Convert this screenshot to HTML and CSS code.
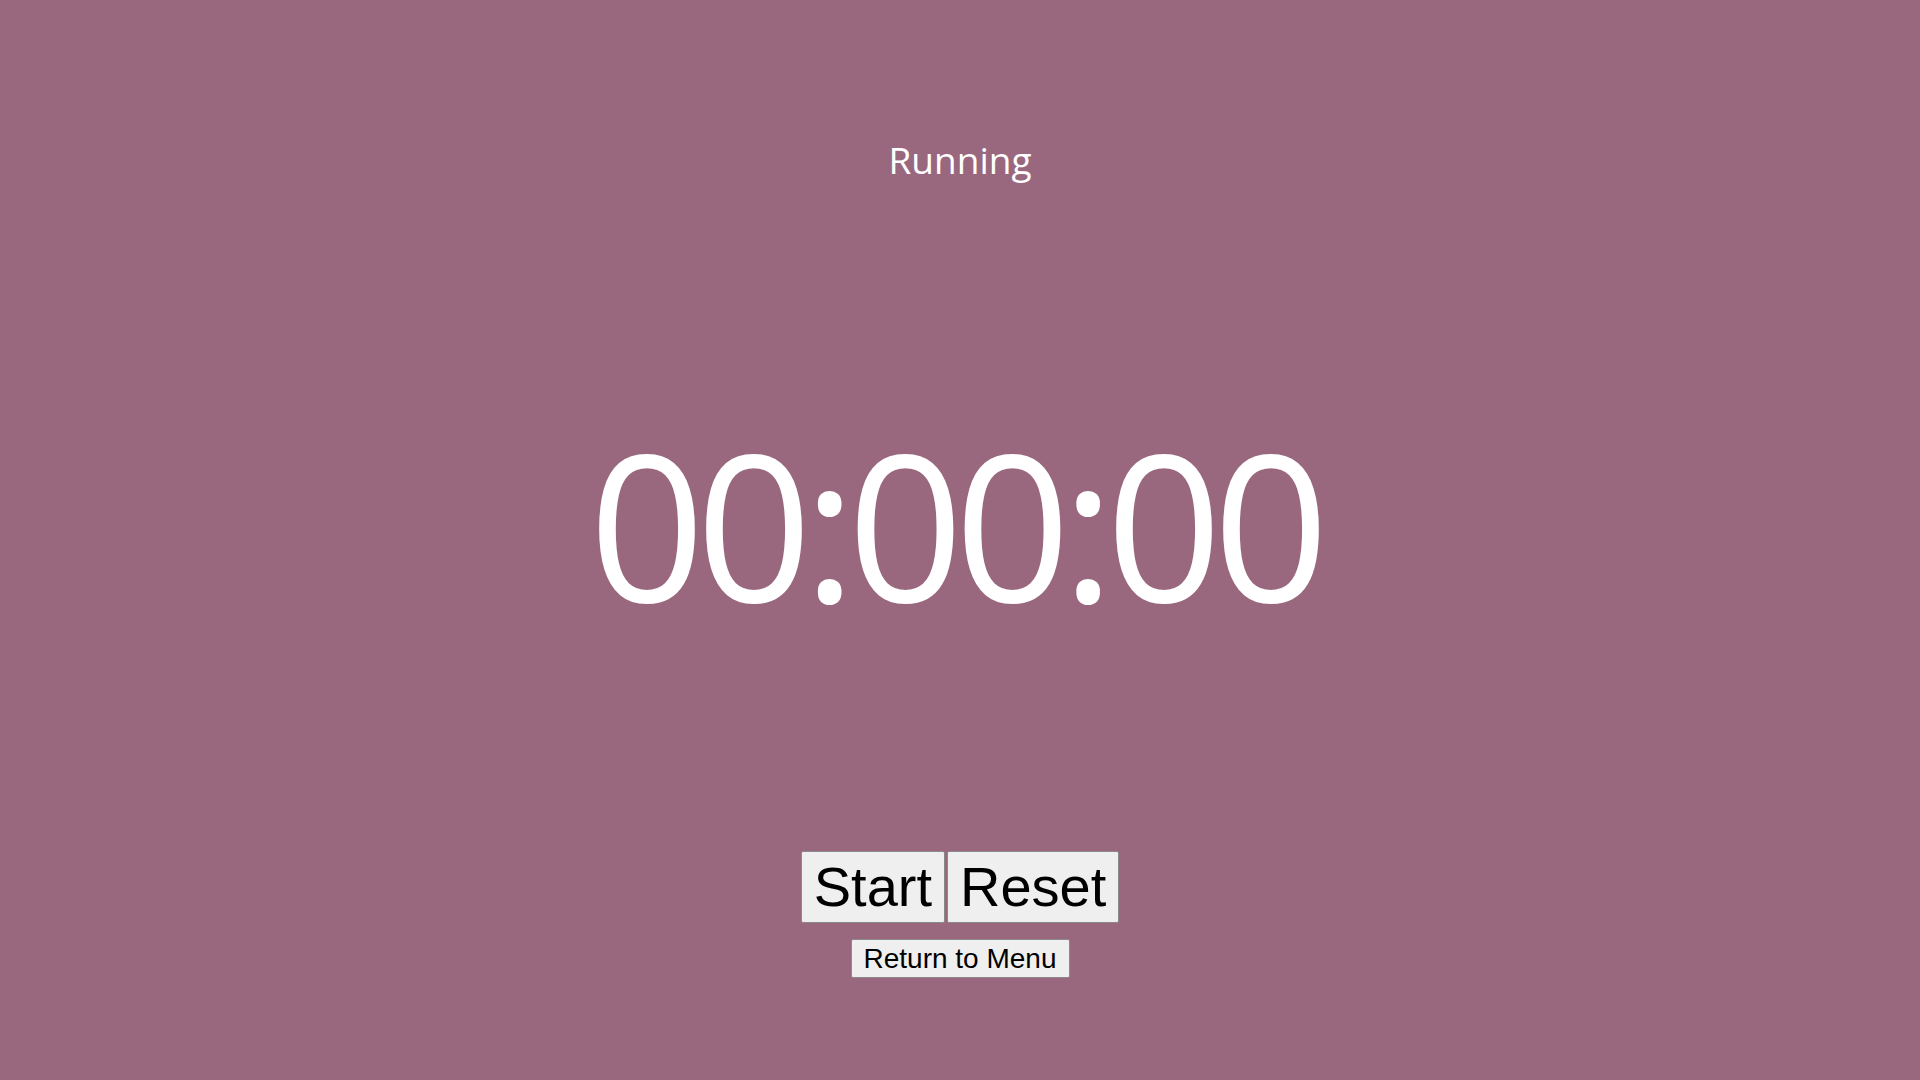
FILE: index.html
```html
<!DOCTYPE html>
<html lang="en">
<head>
<meta charset="utf-8">
<title>Stopwatch</title>
<link rel="stylesheet" href="styles.css">
</head>
<body>
<main class="page">
  <div class="status">Running</div>
  <div class="timer"><span class="timer-text">00:00:00</span></div>
  <div class="controls">
    <button class="btn btn-big">Start</button>
    <button class="btn btn-big">Reset</button>
  </div>
  <button class="btn btn-small">Return to Menu</button>
</main>
</body>
</html>
```
FILE: styles.css
```css
html, body {
  margin: 0;
  padding: 0;
  height: 100%;
}
body {
  background: #99677e;
  overflow: hidden;
}
.page {
  display: flex;
  flex-direction: column;
  align-items: center;
  padding-top: 135px;
}
.status {
  font-family: "Open Sans", "Noto Sans", sans-serif;
  font-size: 37px;
  line-height: 49px;
  color: #ffffff;
}
.timer {
  margin-top: 237px;
  height: 204px;
  font-family: "Open Sans", "Noto Sans", sans-serif;
  font-size: 203px;
  line-height: 204px;
  color: #ffffff;
  display: flex;
  justify-content: center;
}
.timer-text {
  display: inline-block;
  letter-spacing: -9px;
  margin-right: 11px;
  white-space: nowrap;
}
.controls {
  margin-top: 226px;
  display: flex;
  gap: 2px;
}
.btn {
  font-family: "Liberation Sans", Arial, sans-serif;
  color: #000000;
  background: #efefef;
  border: 1px solid #8a8a8a;
  border-radius: 2px;
  margin: 0;
}
.btn-big {
  font-size: 56px;
  line-height: 64px;
  padding: 3px 12px;
}
.btn-small {
  margin-top: 16px;
  font-size: 28px;
  line-height: 32px;
  padding: 2.5px 12px;
}
```
